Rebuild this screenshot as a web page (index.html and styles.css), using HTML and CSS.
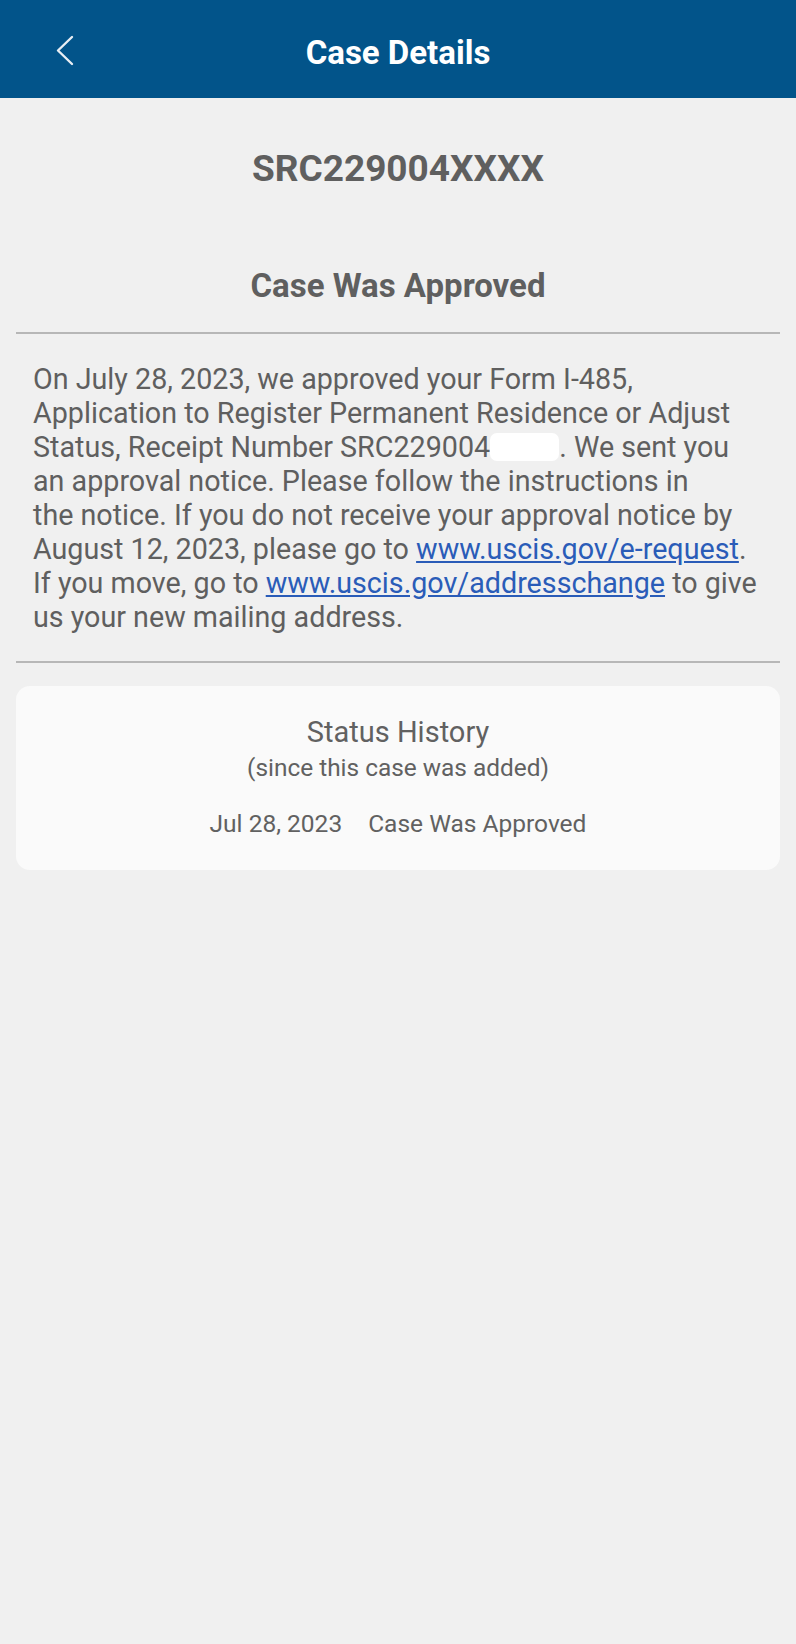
FILE: index.html
```html
<!DOCTYPE html>
<html lang="en">
<head>
    <meta charset="UTF-8">
    <title>Case Details</title>
    <link rel="stylesheet" href="styles.css">
</head>
<body>

<div class="top-bar">
    <button class="back-btn" aria-label="Back">
        <svg width="22" height="31" viewBox="0 0 22 31">
            <polyline points="18,2 4,15.5 18,29" fill="none" stroke="#e8eef4" stroke-width="2.4" stroke-linecap="round" stroke-linejoin="round"/>
        </svg>
    </button>
    <h1>Case Details</h1>
    <span></span>
</div>

<div class="case-page">
    <h2 class="receipt">SRC229004XXXX</h2>
    <h3 class="status-title">Case Was Approved</h3>

    <!-- line breaks follow the app's own wrapping -->
    <p class="status-text">
        On July 28, 2023, we approved your Form I-485,<br>
        Application to Register Permanent Residence or Adjust<br>
        Status, Receipt Number SRC229004<span class="redacted"></span>. We sent you<br>
        an approval notice. Please follow the instructions in<br>
        the notice. If you do not receive your approval notice by<br>
        August 12, 2023, please go to <a href="#">www.uscis.gov/e-request</a>.<br>
        If you move, go to <a href="#">www.uscis.gov/addresschange</a> to give<br>
        us your new mailing address.
    </p>

    <div class="history-card">
        <div class="history-title">Status History</div>
        <div class="history-sub">(since this case was added)</div>
        <div class="history-row">
            <span>Jul 28, 2023</span>
            <span>Case Was Approved</span>
        </div>
    </div>
</div>

</body>
</html>
```

FILE: styles.css
```css
body {
    margin: 0;
    font-family: Roboto, "Noto Sans", Arial, sans-serif;
    background: #f0f0f0;
    color: #5f5f5f;
}
.top-bar {
    height: 98px;
    background: #02548a;
    display: grid;
    grid-template-columns: 130px 1fr 130px;
    align-items: center;
}
.top-bar h1 {
    margin: 0;
    text-align: center;
    color: white;
    font-size: 33px;
    font-weight: bold;
    padding-top: 6px;
}
.back-btn {
    background: none;
    border: none;
    padding: 0;
    justify-self: center;
    margin-top: 3px;
    cursor: pointer;
}
.back-btn svg {
    display: block;
}
.case-page {
    padding: 0 16px;
}
.receipt {
    margin: 49px 0 0;
    font-size: 37px;
    line-height: 44px;
    text-align: center;
    font-weight: bold;
}
.status-title {
    margin: 76px 0 0;
    font-size: 33px;
    line-height: 38px;
    text-align: center;
    font-weight: bold;
    padding-bottom: 27px;
    border-bottom: 2px solid #b7b7b7;
}
.status-text {
    margin: 0;
    padding: 28px 4px 27px 17px;
    font-size: 28.7px;
    line-height: 34px;
    border-bottom: 2px solid #b7b7b7;
}
.status-text a {
    color: #2a5cb8;
}
.redacted {
    display: inline-block;
    width: 69px;
    height: 28px;
    background: white;
    border-radius: 7px;
    vertical-align: -4px;
}
.history-card {
    margin-top: 23px;
    background: #fafafa;
    border-radius: 14px;
    padding: 29px 0 32px;
    text-align: center;
    color: #616161;
}
.history-title {
    font-size: 29px;
    line-height: 34px;
}
.history-sub {
    margin-top: 4px;
    font-size: 24.4px;
    line-height: 29px;
}
.history-row {
    margin-top: 27px;
    font-size: 24.5px;
    line-height: 29px;
    display: flex;
    justify-content: center;
    gap: 26px;
}
```
